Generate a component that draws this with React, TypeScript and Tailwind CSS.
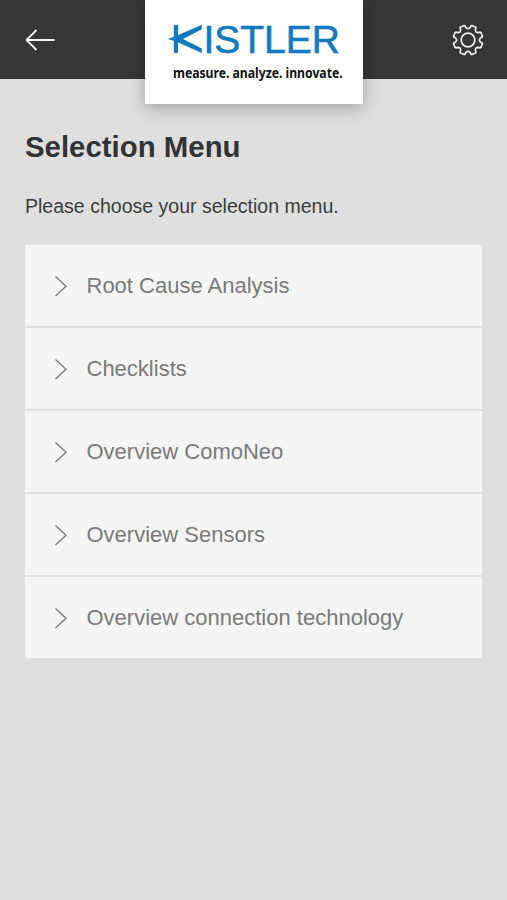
const items = [
  'Root Cause Analysis',
  'Checklists',
  'Overview ComoNeo',
  'Overview Sensors',
  'Overview connection technology',
];

// Outline of an eight-toothed gear centred on (16, 16).
function gearPath() {
  const at = (r: number, deg: number) => {
    const a = (deg * Math.PI) / 180;
    return `${(16 + r * Math.cos(a)).toFixed(2)} ${(16 + r * Math.sin(a)).toFixed(2)}`;
  };
  let d = '';
  for (let i = 0; i < 8; i++) {
    const c = 22.5 + i * 45;
    d += `${i === 0 ? 'M' : 'L'}${at(12.8, c - 12.5)} L${at(14.4, c - 11)} Q${at(14.9, c - 10)} ${at(14.9, c - 7)} L${at(14.9, c + 7)} Q${at(14.9, c + 10)} ${at(14.4, c + 11)} L${at(12.8, c + 12.5)} Q${at(10.2, c + 22.5)} ${at(12.8, c + 32.5)} `;
  }
  return d + 'Z';
}

function Logo() {
  return (
    <svg role="img" aria-label="Kistler" width="218" height="104" viewBox="0 0 218 104" className="overflow-visible">
      <g fill="#127abf">
        <path d="M28.8 25h4.3v28h-4.3z" />
        <path d="M56.8 24.8v4.4L38 39l18.8 9.6V53L31 41.6 22.7 39l8.3-3z" />
      </g>
      <text x="58.4" y="53" fontSize="39.5" textLength="136.5" lengthAdjust="spacingAndGlyphs" fill="#127abf" stroke="#127abf" strokeWidth="0.6" fontFamily="Liberation Sans, Arial, sans-serif">ISTLER</text>
      <text transform="translate(28 78) scale(0.9 1)" fontSize="13.6" fontWeight="700" textLength="188.5" lengthAdjust="spacing" fill="#111" fontFamily="Noto Sans, sans-serif">measure. analyze. innovate.</text>
    </svg>
  );
}

export default function App() {
  return (
    <div className="min-h-[900px] w-full bg-[#dfdfdf] font-['Liberation_Sans',Arial,sans-serif]">
      <header className="flex h-[79px] items-start justify-between bg-[#363636]">
        <button aria-label="Back" className="mt-[28px] ml-[25px] h-6 w-[120px]">
          <svg width="32" height="24" viewBox="0 0 32 24" fill="none" stroke="#f4f4f4" strokeWidth="1.8">
            <path d="M11.5 2 1.5 12l10 10M1.5 12h28" />
          </svg>
        </button>
        <div className="z-10 h-[104px] w-[218px] bg-white shadow-[0_4px_16px_rgba(0,0,0,0.28)]">
          <Logo />
        </div>
        <button aria-label="Settings" className="mt-[24px] mr-[23px] flex h-8 w-[121px] justify-end">
          <svg width="32" height="32" viewBox="0 0 32 32" fill="none" stroke="#ececec" strokeWidth="1.7" strokeLinejoin="round">
            <path d={gearPath()} />
            <circle cx="16" cy="16" r="6.8" />
          </svg>
        </button>
      </header>
      <main className="px-[25px]">
        <h1 className="mt-[48px] text-[29.4px] leading-10 font-bold whitespace-nowrap text-[#333]">Selection Menu</h1>
        <p className="mt-[27px] text-[19.55px] leading-6 whitespace-nowrap text-[#3c3c3c]">Please choose your selection menu.</p>
        <ul className="mt-[27px] flex flex-col gap-[2px]">
          {items.map((label) => (
            <li key={label} className="flex h-[81px] items-center bg-[#f5f5f5] pl-[29px]">
              <svg width="16" height="24" viewBox="0 0 16 24" fill="none" stroke="#777" strokeWidth="1.3">
                <path d="M1.5 2.5 12 12.3 1.5 22" />
              </svg>
              <span className="ml-[16.5px] text-[22px] leading-7 whitespace-nowrap text-[#7a7a7a]">{label}</span>
            </li>
          ))}
        </ul>
      </main>
    </div>
  );
}
